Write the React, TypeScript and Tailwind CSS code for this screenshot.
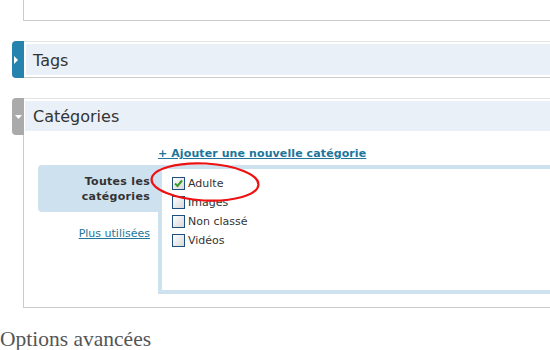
import React from "react";

const categories = [
  { name: "Adulte", checked: true },
  { name: "Images", checked: false },
  { name: "Non classé", checked: false },
  { name: "Vidéos", checked: false },
];

function CheckBox({ checked }: { checked: boolean }) {
  return (
    <span className="relative inline-block w-[13px] h-[13px] border border-[#1f4f7f] bg-gradient-to-br from-white to-[#d8d8d8] shrink-0">
      {checked && (
        <svg viewBox="0 0 11 11" className="absolute left-0 top-0 w-[11px] h-[11px]">
          <path d="M2 5.5 L4.5 8 L9 2.5" stroke="#3a9a2a" strokeWidth="2" fill="none" />
        </svg>
      )}
    </span>
  );
}

export default function App() {
  return (
    <div className="relative w-[550px] h-[350px] overflow-hidden bg-white text-[#333] font-['DejaVu_Sans',sans-serif]">
      <div className="pl-[12px]">
        {/* previous box */}
        <div className="ml-[11px] h-[21px] border-l border-b border-[#cccccc]" />

        {/* TAGS */}
        <div className="relative ml-[11px] mt-[20px] border-t border-[#e3e3e3] border-b border-b-[#cccccc] py-[2px] pl-[3px]">
          <div className="absolute -left-[11px] -top-px w-[12px] h-[37px] rounded-l-[4px] bg-[#2683ae] flex items-center pl-[2px]">
            <svg width="4" height="8" viewBox="0 0 4 8">
              <path d="M0 0 L4 4 L0 8 Z" fill="#fff" />
            </svg>
          </div>
          <div className="h-[31px] bg-[#e9f0f8] flex items-center pl-[7px] pt-[2px] text-[16px]">Tags</div>
        </div>

        {/* CATEGORIES */}
        <div className="relative ml-[11px] mt-[20px] border-t border-t-[#e3e3e3] border-l border-b border-[#cccccc] pb-[13px]">
          <div className="absolute -left-[12px] -top-px w-[12px] h-[37px] rounded-l-[4px] bg-[#aaaaaa] flex items-center justify-center">
            <svg width="7" height="4" viewBox="0 0 7 4" className="mt-[1px]">
              <path d="M0 0 L7 0 L3.5 4 Z" fill="#fff" />
            </svg>
          </div>
          <div className="pt-[2px] pl-[1px]">
            <div className="h-[30px] bg-[#e9f0f8] flex items-center pl-[8px] pt-[2px] text-[16px]">Catégories</div>
          </div>

          <div className="pl-[14px]">
            <div className="flex mt-[16px] leading-[14px]">
              <div className="w-[120px]" />
              <span className="text-[11px] font-bold text-[#21759b] underline tracking-[0.1px]">
                + Ajouter une nouvelle catégorie
              </span>
            </div>

            <div className="flex mt-[4px]">
              <div className="w-[120px] flex flex-col">
                <div className="bg-[#cee1ef] rounded-l-[4px] pt-[9px] pb-[8px] pr-[8px] text-right text-[11px] font-bold leading-[15px] tracking-[0.3px]">
                  Toutes les
                  <br />
                  catégories
                </div>
                <div className="mt-[15px] pr-[8px] text-right text-[11px] leading-[14px] text-[#21759b] underline">
                  Plus utilisées
                </div>
              </div>
              <div className="flex-1 h-[129px] border-4 border-r-0 border-[#cee1ef] pt-[5px] pl-[10px]">
                {categories.map((c) => (
                  <div key={c.name} className="flex items-center h-[19px] gap-[3px] text-[11px]">
                    <CheckBox checked={c.checked} />
                    <span className="mt-[1px]">{c.name}</span>
                  </div>
                ))}
              </div>
            </div>
          </div>
        </div>
      </div>

      <div className="mt-[19px] text-[21.5px] leading-[24px] text-[#555] font-['Liberation_Serif',serif]">
        Options avancées
      </div>

      {/* annotation */}
      <svg className="absolute left-[148px] top-[160px]" width="114" height="44" viewBox="0 0 114 44">
        <ellipse cx="57" cy="22" rx="53.5" ry="18.5" fill="none" stroke="#ee1111" strokeWidth="2.2" transform="rotate(3 57 22)" />
      </svg>
    </div>
  );
}
